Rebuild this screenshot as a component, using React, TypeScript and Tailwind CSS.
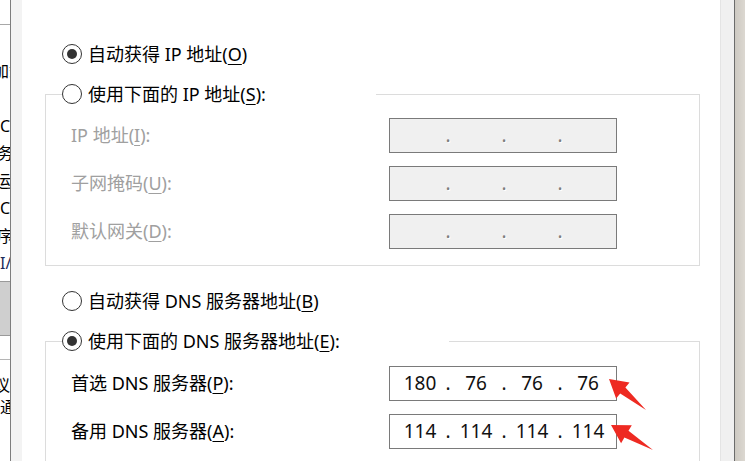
import type { ReactNode } from 'react';

const FONT = "font-['Noto_Sans','Noto_Sans_CJK_SC',sans-serif]";

type Pt = [number, number];

// tapered annotation arrow, computed from tip and tail
const arrowPoints = (tip: Pt, tail: Pt) => {
  const dx = tip[0] - tail[0];
  const dy = tip[1] - tail[1];
  const len = Math.hypot(dx, dy);
  const ux = dx / len;
  const uy = dy / len;
  const nx = -uy;
  const ny = ux;
  const bx = tip[0] - ux * 18;
  const by = tip[1] - uy * 18;
  const pts: Pt[] = [
    tip,
    [bx + nx * 10.5, by + ny * 10.5],
    [bx + nx * 4, by + ny * 4],
    tail,
    [bx - nx * 4, by - ny * 4],
    [bx - nx * 10.5, by - ny * 10.5],
  ];
  return pts.map((p) => `${p[0].toFixed(1)},${p[1].toFixed(1)}`).join(' ');
};

const Radio = ({ checked }: { checked?: boolean }) => (
  <span className="w-[20px] h-[20px] shrink-0 rounded-full border-[1.5px] border-[#333] bg-white flex items-center justify-center">
    {checked && <span className="w-[10px] h-[10px] rounded-full bg-[#333]" />}
  </span>
);

const Key = ({ children }: { children: ReactNode }) => (
  <u className="underline decoration-1 underline-offset-[3px]">{children}</u>
);

const RadioRow = ({ checked, children }: { checked?: boolean; children: ReactNode }) => (
  <div className="h-[24px] flex items-center gap-[6px] text-[18px] text-black whitespace-nowrap">
    <Radio checked={checked} />
    <span>{children}</span>
  </div>
);

const IpBox = ({ parts, disabled }: { parts: string[]; disabled?: boolean }) => (
  <div
    className={`h-[35px] w-[228px] border flex items-center pl-[9px] ${
      disabled ? 'bg-[#f0f0f0] border-[#7a7a7a]' : 'bg-white border-[#7a7a7a]'
    }`}
  >
    <div className="grid grid-cols-[42px_14px_42px_14px_42px_14px_42px] items-center text-[19px] leading-none text-[#111]">
      {parts.map((p, i) => (
        <div key={i} className="contents">
          {i > 0 && (
            <span
              className={`text-center ${
                disabled ? 'text-[#7d7d7d] [text-shadow:1px_1px_0_#ffffff]' : ''
              }`}
            >
              .
            </span>
          )}
          <span className="text-center">{p}</span>
        </div>
      ))}
    </div>
  </div>
);

const FieldRow = ({ label, parts, disabled }: { label: ReactNode; parts: string[]; disabled?: boolean }) => (
  <div className="grid grid-cols-[318px_228px] items-center pl-[9px]">
    <span className={`text-[18px] whitespace-nowrap ${disabled ? 'text-[#a0a0a0]' : 'text-black'}`}>{label}</span>
    <IpBox parts={parts} disabled={disabled} />
  </div>
);

const LeftFragments = () => (
  <div className="w-[10px] shrink-0 overflow-hidden bg-white text-[16px] text-black leading-none">
    <div className="h-[25px] border-b border-[#a8a8a8]" />
    <div className="h-[34px]" />
    <div className="h-[24px] flex items-center whitespace-nowrap -ml-[7px]">加载</div>
    <div className="h-[29px]" />
    <div className="h-[27.5px] flex items-center whitespace-nowrap">Cl</div>
    <div className="h-[27.5px] flex items-center whitespace-nowrap -ml-[3px]">务器</div>
    <div className="h-[27.5px] flex items-center whitespace-nowrap -ml-[5px]">运行</div>
    <div className="h-[27.5px] flex items-center whitespace-nowrap">Cl</div>
    <div className="h-[27.5px] flex items-center whitespace-nowrap -ml-[3px]">序列</div>
    <div className="h-[27.5px] flex items-center whitespace-nowrap text-[#1c2b5a]">I/</div>
    <div className="h-[4px]" />
    <div className="h-[55px] bg-[#cfcfcf] border-y border-[#9a9a9a]" />
    <div className="h-[24px] border-b border-[#b5b5b5]" />
    <div className="h-[14px]" />
    <div className="h-[22px] flex items-center whitespace-nowrap -ml-[6px]">议</div>
    <div className="h-[22px] flex items-center whitespace-nowrap">通</div>
  </div>
);

export default function App() {
  return (
    <div className={`relative flex w-[745px] h-[461px] overflow-hidden bg-white ${FONT}`}>
      <LeftFragments />
      <div className="w-[1px] shrink-0 bg-[#7d7d7d]" />
      <div className="w-[11px] shrink-0 bg-[#f3f3f3]" />

      {/* dialog body */}
      <div className="w-[698px] shrink-0 bg-white pt-[42px]">
        <div className="ml-[40px]">
          <RadioRow checked>
            自动获得 IP 地址(<Key>O</Key>)
          </RadioRow>
        </div>

        <fieldset className="ml-[23px] mt-[16px] w-[655px] border border-[#dcdcdc] pl-[16px] pt-[12px] pb-[16px]">
          <legend className="p-0 w-[314px] bg-white">
            <RadioRow>
              使用下面的 IP 地址(<Key>S</Key>):
            </RadioRow>
          </legend>
          <div className="flex flex-col gap-[13px]">
            <FieldRow disabled label={<>IP 地址(<Key>I</Key>):</>} parts={['', '', '', '']} />
            <FieldRow disabled label={<>子网掩码(<Key>U</Key>):</>} parts={['', '', '', '']} />
            <FieldRow disabled label={<>默认网关(<Key>D</Key>):</>} parts={['', '', '', '']} />
          </div>
        </fieldset>

        <div className="ml-[40px] mt-[23px]">
          <RadioRow>
            自动获得 DNS 服务器地址(<Key>B</Key>)
          </RadioRow>
        </div>

        <fieldset className="ml-[23px] mt-[16px] w-[655px] border border-[#dcdcdc] pl-[16px] pt-[13px] pb-[40px]">
          <legend className="p-0 w-[387px] bg-white">
            <RadioRow checked>
              使用下面的 DNS 服务器地址(<Key>E</Key>):
            </RadioRow>
          </legend>
          <div className="flex flex-col gap-[13px]">
            <FieldRow label={<>首选 DNS 服务器(<Key>P</Key>):</>} parts={['180', '76', '76', '76']} />
            <FieldRow label={<>备用 DNS 服务器(<Key>A</Key>):</>} parts={['114', '114', '114', '114']} />
          </div>
        </fieldset>
      </div>

      {/* right edge: dialog frame + window behind */}
      <div className="w-[14px] shrink-0 bg-[#f0f0f0] border-l border-[#e4e4e4]" />
      <div className="w-[1px] shrink-0 bg-[#6b6b6b]" />
      <div className="flex-1 bg-gradient-to-r from-[#cdc9c2] to-[#dcd8d1]" />

      {/* red annotation arrows */}
      <svg className="absolute inset-0 pointer-events-none" width="745" height="461" viewBox="0 0 745 461">
        <polygon points={arrowPoints([609, 379], [646, 410])} fill="#ee2a22" />
        <polygon points={arrowPoints([611, 425], [653, 450])} fill="#ee2a22" />
      </svg>
    </div>
  );
}
